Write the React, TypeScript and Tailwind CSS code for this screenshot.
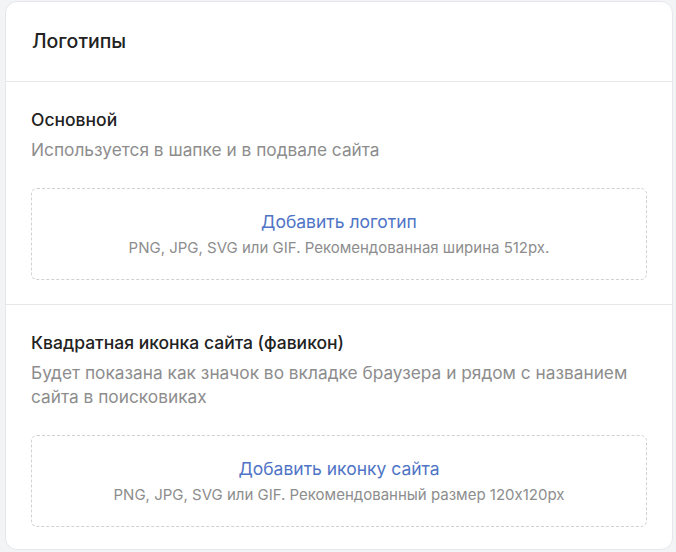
const sections = [
  {
    title: "Основной",
    hint: "Используется в шапке и в подвале сайта",
    action: "Добавить логотип",
    note: "PNG, JPG, SVG или GIF. Рекомендованная ширина 512px.",
  },
  {
    title: "Квадратная иконка сайта (фавикон)",
    hint: "Будет показана как значок во вкладке браузера и рядом с названием сайта в поисковиках",
    action: "Добавить иконку сайта",
    note: "PNG, JPG, SVG или GIF. Рекомендованный размер 120x120px",
  },
];

export default function App() {
  return (
    <div className="min-h-screen bg-[#f3f4f6] pl-[5px] pr-[3px] pt-px font-['Inter',sans-serif]">
      <div className="overflow-hidden rounded-xl border border-[#e6e7ea] bg-white">
        <header className="flex h-[80px] items-center border-b border-[#e6e7ea] px-[26px]">
          <h1 className="text-[19.5px] font-medium text-[#222]">Логотипы</h1>
        </header>
        {sections.map((section, i) => (
          <section
            key={section.title}
            className={`px-[25px] pt-[26px] ${i === 0 ? "border-b border-[#e6e7ea] pb-[24px]" : "pb-[22px]"}`}
          >
            <h2 className="text-[17.5px] font-medium leading-[24px] text-[#222]">{section.title}</h2>
            <p className="mt-[6px] text-[17.3px] leading-[24px] text-[#8d8d8d]">{section.hint}</p>
            <button className="mt-[26px] flex h-[92px] w-full flex-col items-center justify-center rounded-md border border-dashed border-[#cfd1d5] text-center">
              <span className="text-[17.5px] leading-[24px] text-[#4f74c6]">{section.action}</span>
              <span className="mt-[4px] text-[15px] leading-[20px] text-[#8d8d8d]">{section.note}</span>
            </button>
          </section>
        ))}
      </div>
    </div>
  );
}
